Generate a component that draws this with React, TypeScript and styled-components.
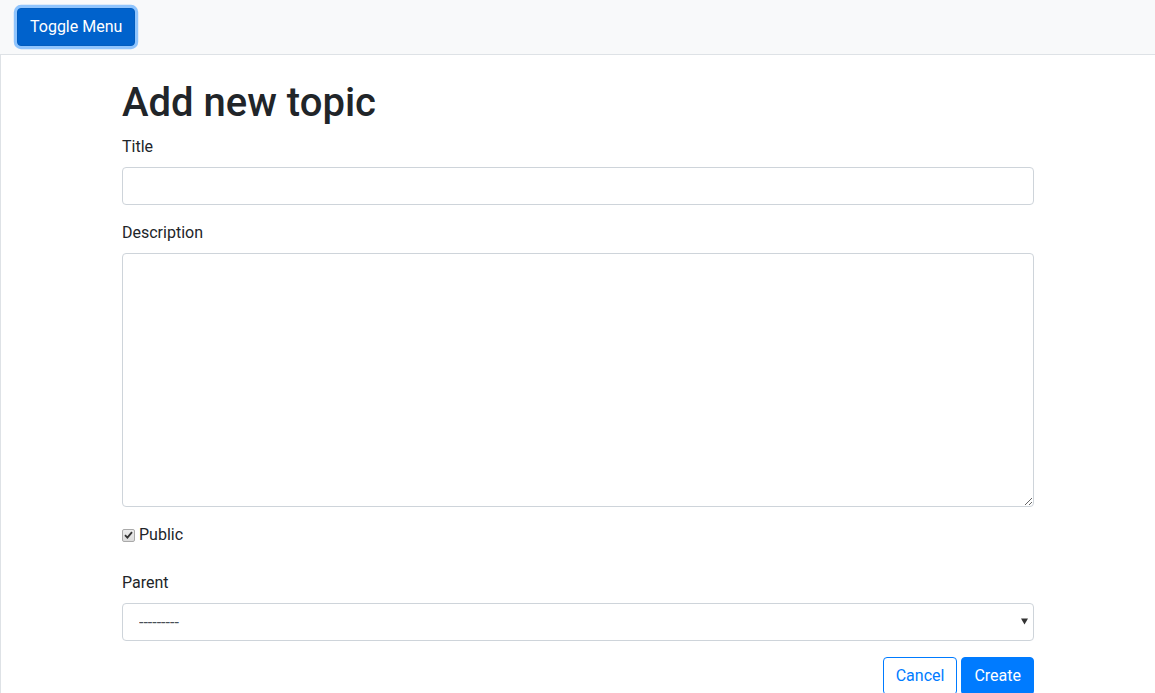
import React from "react";
import styled, { createGlobalStyle } from "styled-components";

const GlobalStyle = createGlobalStyle`
  html, body { margin: 0; padding: 0; background: #fff; }
  body {
    font-family: Roboto, "Liberation Sans", Arial, sans-serif;
    font-size: 16px;
    line-height: 1.5;
    color: #212529;
    overflow: hidden;
  }
  *, *::before, *::after { box-sizing: border-box; }
`;

const Page = styled.div`
  display: flex;
  min-height: 693px;
`;

const Sidebar = styled.div`
  width: 1px;
  background: linear-gradient(#f8f9fa 0 54px, #dee2e6 54px);
`;

const Wrapper = styled.div`
  flex: 1;
  display: flex;
  flex-direction: column;
`;

const NavBar = styled.nav`
  display: flex;
  align-items: center;
  height: 55px;
  padding: 8px 16px;
  background: #f8f9fa;
  border-bottom: 1px solid #dee2e6;
`;

const Button = styled.button<{ $variant: "primary" | "outline" | "active" }>`
  font-family: inherit;
  font-size: 16px;
  line-height: 24px;
  padding: 6px 12px;
  border-radius: 4px;
  border: 1px solid
    ${(p) => (p.$variant === "active" ? "#005cbf" : "#007bff")};
  background: ${(p) =>
    p.$variant === "outline" ? "#fff" : p.$variant === "active" ? "#0062cc" : "#007bff"};
  color: ${(p) => (p.$variant === "outline" ? "#007bff" : "#fff")};
  box-shadow: ${(p) =>
    p.$variant === "active" ? "0 0 0 3.2px rgba(38,143,255,0.5)" : "none"};
  cursor: pointer;
`;

const Container = styled.div`
  width: 912px;
  margin: 24px auto 0;
`;

const Heading = styled.h1`
  margin: 0 0 8px;
  font-size: 40px;
  font-weight: 500;
  line-height: 48px;
  color: #212529;
`;

const Group = styled.div<{ $mb?: number }>`
  margin-bottom: ${(p) => p.$mb ?? 16}px;
`;

const Label = styled.label`
  display: block;
  margin-bottom: 8px;
  line-height: 24px;
`;

const Input = styled.input`
  display: block;
  width: 100%;
  height: 38px;
  padding: 6px 12px;
  font-family: inherit;
  font-size: 16px;
  color: #495057;
  background: #fff;
  border: 1px solid #ced4da;
  border-radius: 4px;
  outline: none;
`;

const TextArea = styled.textarea`
  display: block;
  width: 100%;
  height: 254px;
  padding: 6px 12px;
  font-family: inherit;
  font-size: 16px;
  line-height: 24px;
  color: #495057;
  border: 1px solid #ced4da;
  border-radius: 4px;
  resize: vertical;
  outline: none;
`;

const CheckRow = styled.label`
  display: flex;
  align-items: center;
  gap: 4px;
  height: 24px;
  cursor: pointer;
`;

const HiddenCheck = styled.input`
  position: absolute;
  opacity: 0;
  width: 0;
  height: 0;
  margin: 0;
`;

const CheckBox = styled.span`
  display: inline-flex;
  align-items: center;
  justify-content: center;
  width: 13px;
  height: 13px;
  border: 1px solid #a9a9a9;
  border-radius: 2px;
  background: linear-gradient(#ececec, #dcdcdc);
  color: #333;
`;

const SelectWrap = styled.div`
  position: relative;
`;

const Select = styled.select`
  display: block;
  width: 100%;
  height: 38px;
  padding: 6px 12px 6px 16px;
  font-family: inherit;
  font-size: 16px;
  color: #495057;
  background: #fff;
  border: 1px solid #ced4da;
  border-radius: 4px;
  outline: none;
  appearance: none;
  -webkit-appearance: none;
`;

const Arrow = styled.svg`
  position: absolute;
  right: 6px;
  top: 15px;
  pointer-events: none;
`;

const Actions = styled.div`
  display: flex;
  justify-content: flex-end;
  gap: 4px;
`;

export default function App() {
  return (
    <>
      <GlobalStyle />
      <Page>
        <Sidebar />
        <Wrapper>
          <NavBar>
            <Button $variant="active">Toggle Menu</Button>
          </NavBar>
          <Container>
            <Heading>Add new topic</Heading>
            <form onSubmit={(e) => e.preventDefault()}>
              <Group>
                <Label htmlFor="title">Title</Label>
                <Input id="title" type="text" />
              </Group>
              <Group>
                <Label htmlFor="desc">Description</Label>
                <TextArea id="desc" />
              </Group>
              <Group $mb={24}>
                <CheckRow>
                  <HiddenCheck type="checkbox" defaultChecked />
                  <CheckBox>
                    <svg width="9" height="8" viewBox="0 0 9 8">
                      <path d="M1 4.2 L3.4 6.6 L8 1.2" fill="none" stroke="#333" strokeWidth="1.8" />
                    </svg>
                  </CheckBox>
                  <span>Public</span>
                </CheckRow>
              </Group>
              <Group>
                <Label htmlFor="parent">Parent</Label>
                <SelectWrap>
                  <Select id="parent" defaultValue="">
                    <option value="">---------</option>
                  </Select>
                  <Arrow width="7" height="7" viewBox="0 0 7 7">
                    <path d="M0 0.5 H7 L3.5 6.5 Z" fill="#333" />
                  </Arrow>
                </SelectWrap>
              </Group>
              <Actions>
                <Button type="button" $variant="outline">Cancel</Button>
                <Button type="submit" $variant="primary">Create</Button>
              </Actions>
            </form>
          </Container>
        </Wrapper>
      </Page>
    </>
  );
}
